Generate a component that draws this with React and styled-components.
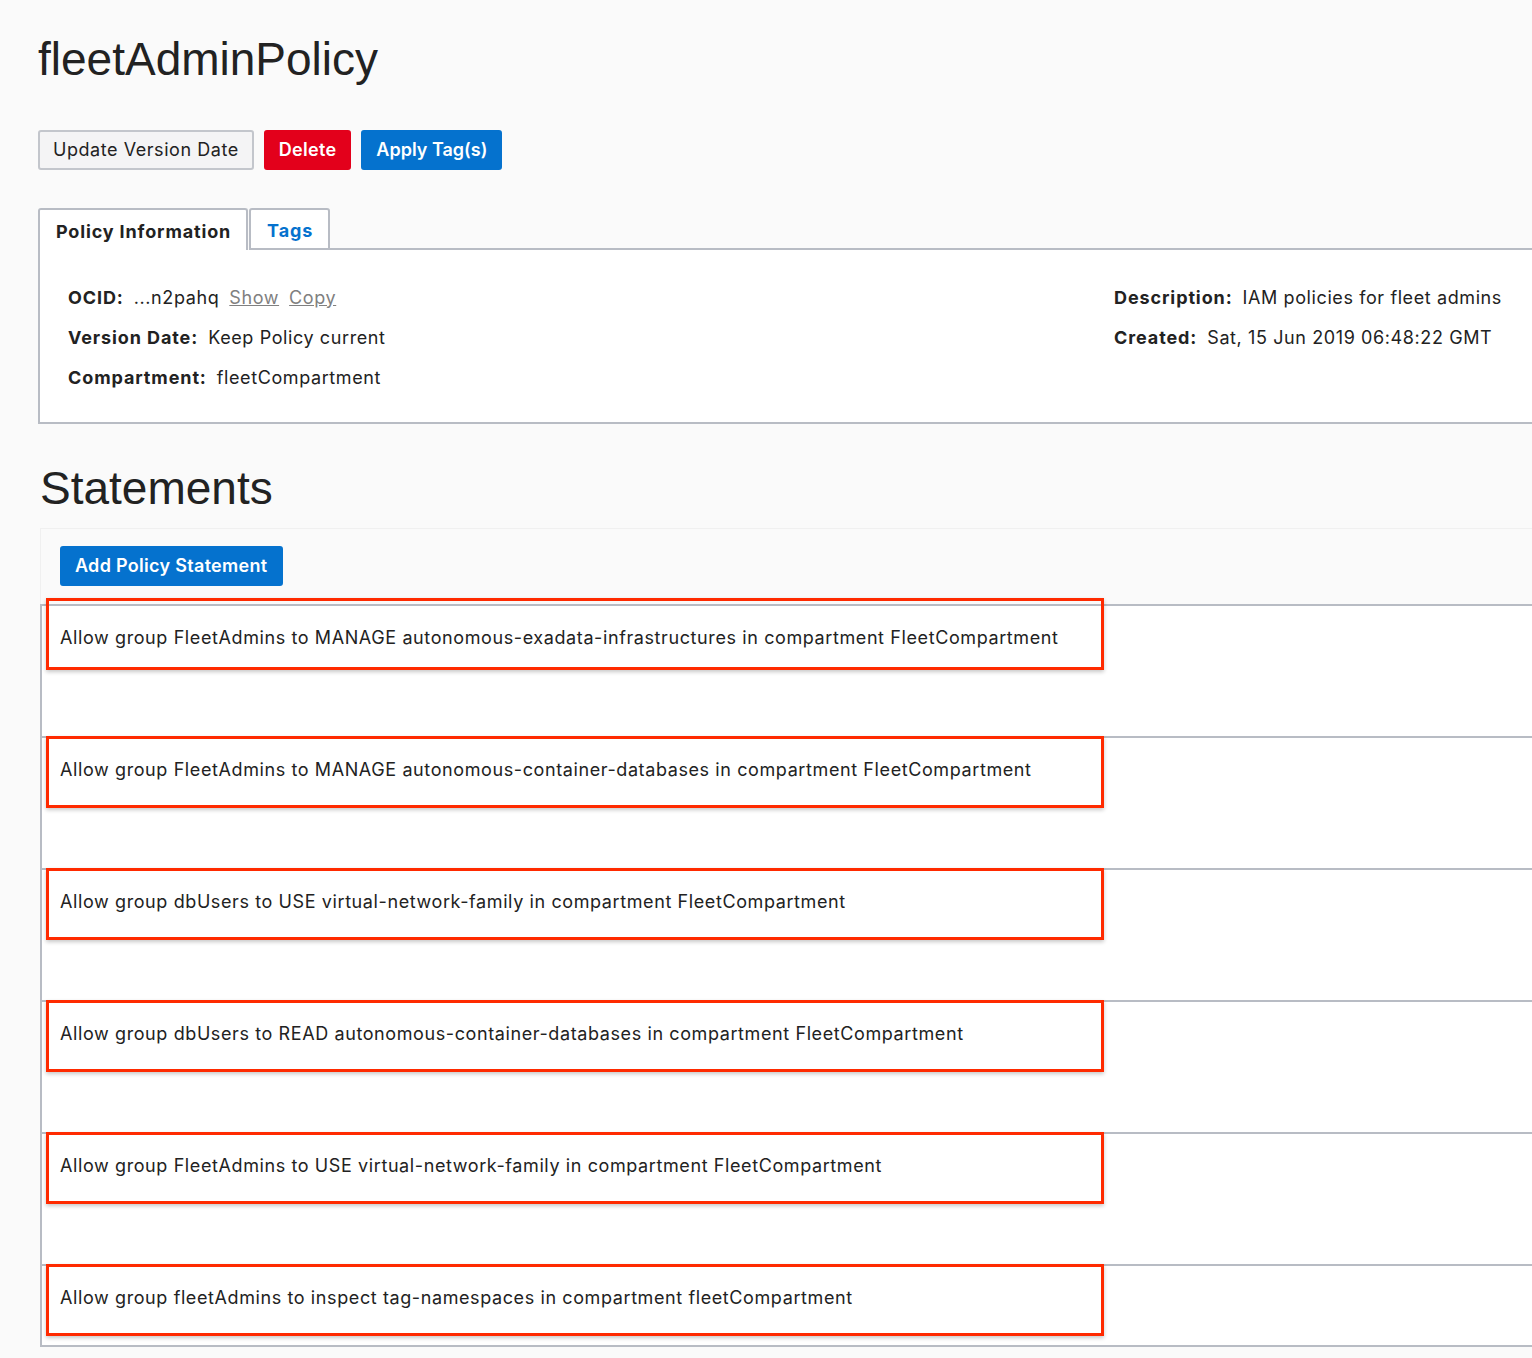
import React from 'react';
import styled, { createGlobalStyle } from 'styled-components';

const GlobalStyle = createGlobalStyle`
  html, body { margin: 0; padding: 0; background: #fafafa; }
  body {
    overflow-x: hidden;
    font-family: Inter, "Noto Sans", sans-serif;
    color: #222;
    -webkit-font-smoothing: antialiased;
  }
`;

const statements = [
    'Allow group FleetAdmins to MANAGE autonomous-exadata-infrastructures in compartment FleetCompartment',
    'Allow group FleetAdmins to MANAGE autonomous-container-databases in compartment FleetCompartment',
    'Allow group dbUsers to USE virtual-network-family in compartment FleetCompartment',
    'Allow group dbUsers to READ autonomous-container-databases in compartment FleetCompartment',
    'Allow group FleetAdmins to USE virtual-network-family in compartment FleetCompartment',
    'Allow group fleetAdmins to inspect tag-namespaces in compartment fleetCompartment',
];

export default function App() {
    return (
    <>
        <GlobalStyle/>
        <Page>
            <Title>fleetAdminPolicy</Title>
            <Actions>
                <Button>Update Version Date</Button>
                <Button variant="danger">Delete</Button>
                <Button variant="primary" tight>Apply Tag(s)</Button>
            </Actions>

            <TabBar>
                <Tab active>Policy Information</Tab>
                <Tab>Tags</Tab>
                <TabFiller/>
            </TabBar>
            <InfoPanel>
                <InfoColumn>
                    <InfoRow>
                        <Label>OCID:</Label>
                        <Value>...n2pahq</Value>
                        <Link>Show</Link>
                        <Link>Copy</Link>
                    </InfoRow>
                    <InfoRow>
                        <Label>Version Date:</Label>
                        <Value>Keep Policy current</Value>
                    </InfoRow>
                    <InfoRow>
                        <Label>Compartment:</Label>
                        <Value>fleetCompartment</Value>
                    </InfoRow>
                </InfoColumn>
                <InfoColumn>
                    <InfoRow>
                        <Label>Description:</Label>
                        <Value>IAM policies for fleet admins</Value>
                    </InfoRow>
                    <InfoRow>
                        <Label>Created:</Label>
                        <Value>Sat, 15 Jun 2019 06:48:22 GMT</Value>
                    </InfoRow>
                </InfoColumn>
            </InfoPanel>

            <SectionTitle>Statements</SectionTitle>
            <Toolbar>
                <Button variant="primary">Add Policy Statement</Button>
            </Toolbar>
            <StatementList>
                {statements.map((text, i) => (
                    <StatementRow key={i} last={i === statements.length - 1}>
                        <Highlight first={i === 0}>{text}</Highlight>
                    </StatementRow>
                ))}
            </StatementList>
        </Page>
    </>
  );
}

const Page = styled.div`
padding: 32px 0 40px 38px;
`;

const Title = styled.h1`
margin: 0;
font-family: "Liberation Sans", Arial, sans-serif;
font-weight: 400;
font-size: 46px;
line-height: 55px;
color: #222;
`;

const SectionTitle = styled(Title).attrs({ as: 'h2' })`
margin: 37px 0 12px 2px;
`;

const Actions = styled.div`
display: flex;
gap: 10px;
margin-top: 43px;
`;

const colors = {
    danger: { bg: '#e3001b', border: '#e3001b', fg: '#fff', weight: 600, spacing: 0.3 },
    primary: { bg: '#0572ce', border: '#0572ce', fg: '#fff', weight: 600, spacing: 0.3 },
    default: { bg: '#f4f4f5', border: '#c3c6cc', fg: '#222', weight: 400, spacing: 0.55 },
};

const Button = styled.button`
${({ variant, tight }) => {
    const c = colors[variant] || colors.default;
    return `
        background: ${c.bg};
        border: 2px solid ${c.border};
        color: ${c.fg};
        font-weight: ${c.weight};
        letter-spacing: ${tight ? 0 : c.spacing}px;
    `;
}}
font-family: Inter, "Noto Sans", sans-serif;
font-size: 18px;
line-height: 20px;
height: 40px;
padding: 0 13px;
border-radius: 3px;
cursor: pointer;
`;

const TabBar = styled.div`
display: flex;
align-items: flex-end;
margin-top: 38px;
height: 42px;
`;

const Tab = styled.div`
box-sizing: border-box;
height: 42px;
padding: 2px 15px 0 16px;
display: flex;
align-items: center;
font-size: 18px;
font-weight: 700;
letter-spacing: 0.85px;
border: 2px solid #b8bcc4;
border-bottom: ${({ active }) => (active ? '0' : '2px solid #b8bcc4')};
border-radius: 3px 3px 0 0;
background: #fff;
color: ${({ active }) => (active ? '#222' : '#0572ce')};
margin-right: 1px;
`;

const TabFiller = styled.div`
flex: 1;
border-bottom: 2px solid #b8bcc4;
margin-left: -1px;
`;

const InfoPanel = styled.div`
display: grid;
grid-template-columns: 1046px 1fr;
background: #fff;
border-left: 2px solid #b8bcc4;
border-bottom: 2px solid #b8bcc4;
padding: 27px 0 25px 28px;
`;

const InfoColumn = styled.div`
display: flex;
flex-direction: column;
`;

const InfoRow = styled.div`
display: flex;
align-items: center;
gap: 10px;
height: 40px;
font-size: 18px;
letter-spacing: 0.6px;
white-space: nowrap;
`;

const Label = styled.span`
font-weight: 700;
letter-spacing: 0.9px;
color: #222;
`;

const Value = styled.span`
color: #222;
`;

const Link = styled.a`
color: #808080;
text-decoration: underline;
cursor: pointer;
`;

const Toolbar = styled.div`
margin-left: 2px;
padding: 18px 20px;
box-shadow: inset 1px 1px 0 #f0f0f0;
display: flex;
`;

const StatementList = styled.div`
margin-left: 2px;
border-left: 2px solid #b8bcc4;
`;

const StatementRow = styled.div`
box-sizing: border-box;
background: #fff;
border-top: 2px solid #b8bcc4;
border-bottom: ${({ last }) => (last ? '2px solid #b8bcc4' : '0')};
height: ${({ last }) => (last ? '83px' : '132px')};
padding-left: 4px;
`;

const Highlight = styled.div`
box-sizing: border-box;
width: 1058px;
height: 72px;
margin-top: ${({ first }) => (first ? '-8px' : '-2px')};
padding: ${({ first }) => (first ? '27px' : '21px')} 11px 0;
border: 3px solid #ff2a00;
box-shadow: 0 2px 4px rgba(0, 0, 0, 0.22);
font-size: 18px;
line-height: 20px;
letter-spacing: 0.6px;
color: #222;
white-space: nowrap;
position: relative;
`;
